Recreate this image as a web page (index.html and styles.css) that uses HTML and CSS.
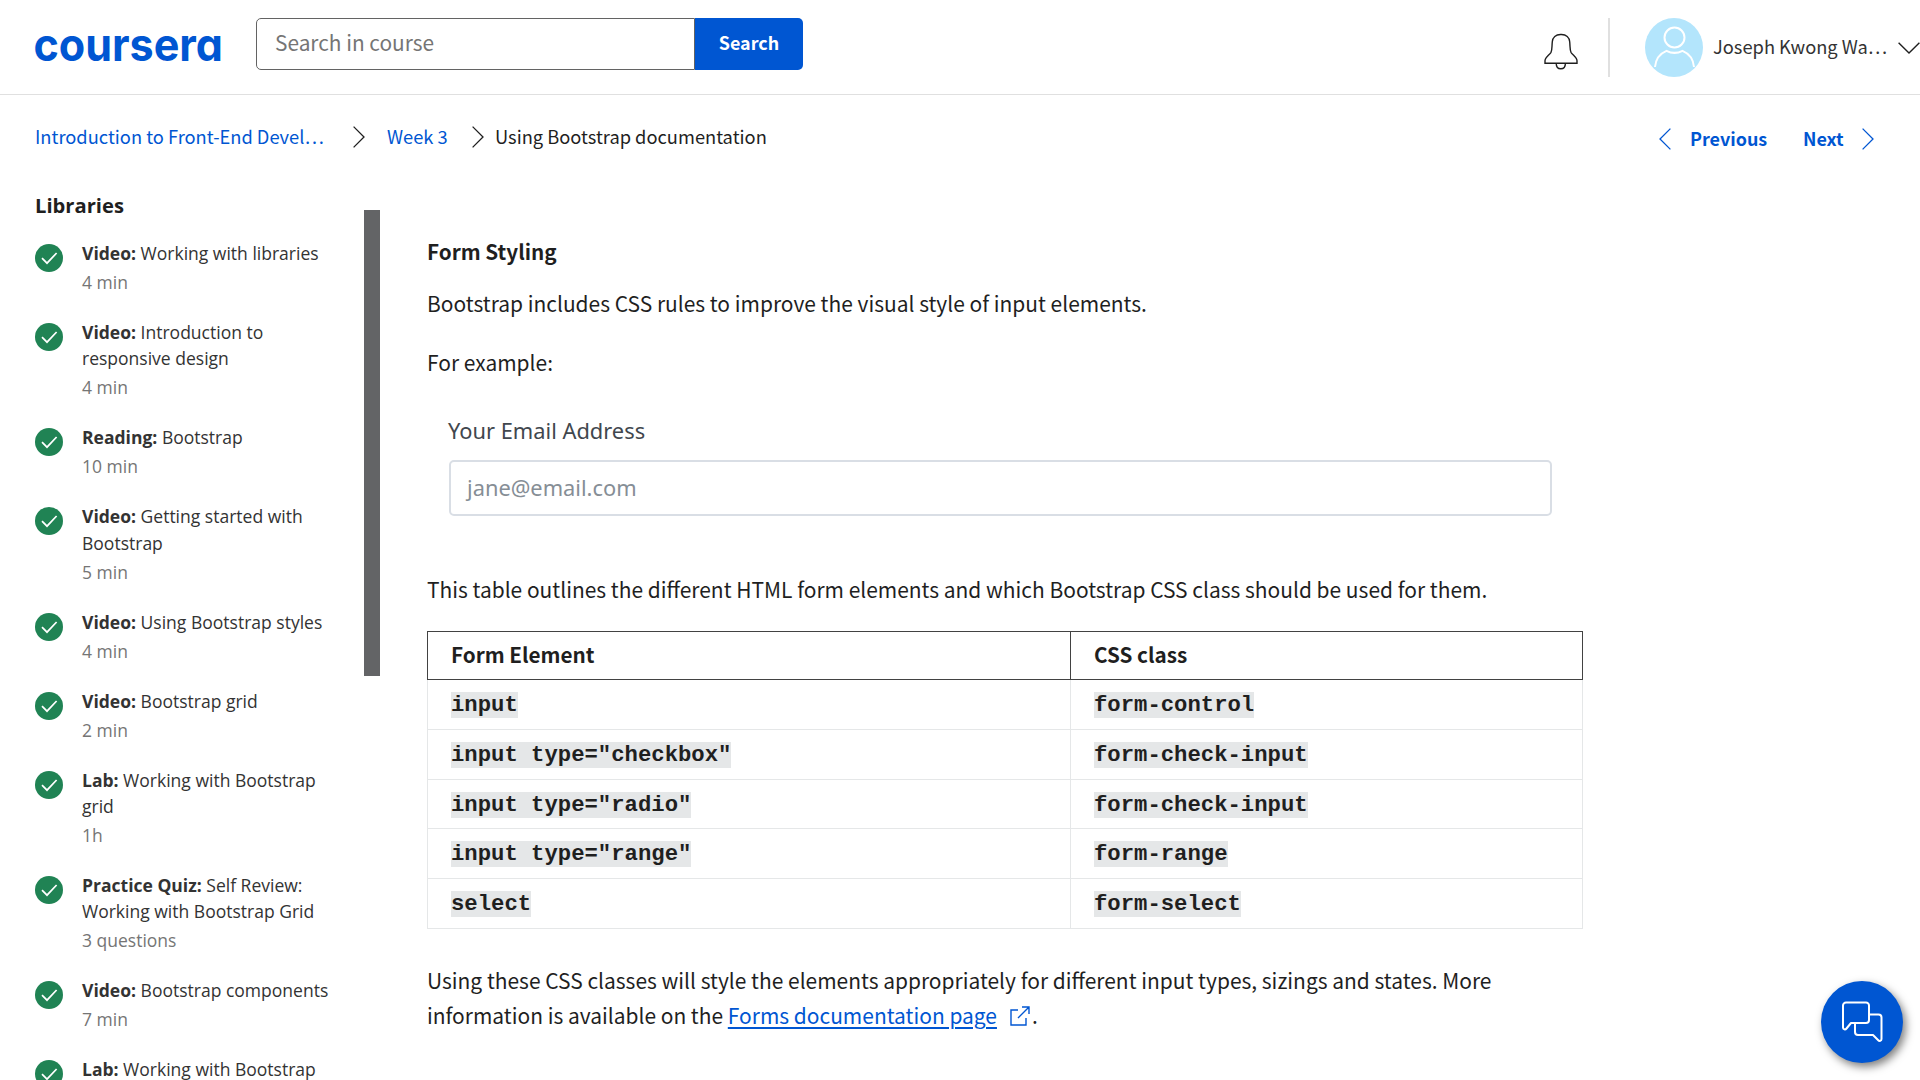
FILE: index.html
```html
<!DOCTYPE html>
<html lang="en">
<head>
<meta charset="utf-8">
<title>Using Bootstrap documentation | Coursera</title>
<link rel="stylesheet" href="styles.css">
</head>
<body>
<svg class="defs" width="0" height="0" aria-hidden="true">
  <symbol id="check" viewBox="0 0 28 28"><circle cx="14" cy="14" r="14" fill="#208354"/><path d="M7 14.2l5 5L21.6 9" fill="none" stroke="#fff" stroke-width="1.7"/></symbol>
  <symbol id="right" viewBox="0 0 12 22"><path d="M.6.6L11 11 .6 21.4" fill="none" stroke="currentColor" stroke-width="1.3"/></symbol>
  <symbol id="left" viewBox="0 0 12 22"><path d="M11.4.6L1 11l10.4 10.4" fill="none" stroke="currentColor" stroke-width="1.3"/></symbol>
</svg>

<header class="header">
  <a class="logo" aria-label="coursera"><svg width="200" height="50" viewBox="0 0 200 50"><text class="wordmark" x="-.5" y="33.500" textLength="189.500" lengthAdjust="spacingAndGlyphs">coursera</text></svg></a>
  <form class="search">
    <div class="search-field">Search in course</div>
    <div class="search-button">Search</div>
  </form>
  <div class="account">
    <svg class="bell" width="34" height="38" viewBox="0 0 34 38" fill="none" stroke="#1f1f1f" stroke-width="1.4"><path d="M16.500 1.500c-4.700 0-7.800 3-8.200 7.300-.5 5-.1 8.200-1.300 10.500C5.500 22 1 24.500 1 27.700v2.500h32v-2.500c0-3.200-4.500-5.700-6-8.400-1.200-2.300-.8-5.500-1.300-10.500-.4-4.300-3.500-7.300-8.200-7.300z"/><path d="M12.200 30.200c0 3.700 1.600 5.600 4.600 5.600s4.600-1.900 4.600-5.600"/></svg>
    <span class="divider"></span>
    <svg class="avatar" width="58" height="59" viewBox="0 0 58 59"><ellipse cx="29" cy="29.500" rx="29" ry="29.500" fill="#b3e5fc"/><g fill="none" stroke="#fff" stroke-width="2"><circle cx="29.500" cy="19.500" r="10"/><path d="M10 49c.6-6.800 4.500-13.300 11.500-16.200 5.200 2.700 10.800 2.700 16 0 7 2.900 10.900 9.400 11.500 16.200"/></g></svg>
    <span class="user">Joseph Kwong Wa…</span>
    <svg width="22" height="12" viewBox="0 0 22 12"><path d="M.6.8L11 11 21.400.8" fill="none" stroke="#1f1f1f" stroke-width="1.4"/></svg>
  </div>
</header>

<nav class="subnav">
  <div class="crumbs">
    <a class="course">Introduction to Front-End Devel…</a>
    <svg class="arrow"><use href="#right"/></svg>
    <a class="week">Week 3</a>
    <svg class="arrow"><use href="#right"/></svg>
    <span class="current">Using Bootstrap documentation</span>
  </div>
  <div class="pager">
    <svg class="arrow"><use href="#left"/></svg>
    <a class="prev">Previous</a>
    <a class="next">Next</a>
    <svg class="arrow"><use href="#right"/></svg>
  </div>
</nav>

<div class="layout">
  <aside class="sidebar">
    <h2>Libraries</h2>
    <ul class="lessons">
      <li><svg class="tick"><use href="#check"/></svg><div><p><b>Video:</b> Working with libraries</p><small>4 min</small></div></li>
      <li><svg class="tick"><use href="#check"/></svg><div><p><b>Video:</b> Introduction to responsive design</p><small>4 min</small></div></li>
      <li><svg class="tick"><use href="#check"/></svg><div><p><b>Reading:</b> Bootstrap</p><small>10 min</small></div></li>
      <li><svg class="tick"><use href="#check"/></svg><div><p><b>Video:</b> Getting started with Bootstrap</p><small>5 min</small></div></li>
      <li><svg class="tick"><use href="#check"/></svg><div><p><b>Video:</b> Using Bootstrap styles</p><small>4 min</small></div></li>
      <li><svg class="tick"><use href="#check"/></svg><div><p><b>Video:</b> Bootstrap grid</p><small>2 min</small></div></li>
      <li><svg class="tick"><use href="#check"/></svg><div><p><b>Lab:</b> Working with Bootstrap grid</p><small>1h</small></div></li>
      <li><svg class="tick"><use href="#check"/></svg><div><p><b>Practice Quiz:</b> Self Review: Working with Bootstrap Grid</p><small>3 questions</small></div></li>
      <li><svg class="tick"><use href="#check"/></svg><div><p><b>Video:</b> Bootstrap components</p><small>7 min</small></div></li>
      <li><svg class="tick"><use href="#check"/></svg><div><p><b>Lab:</b> Working with Bootstrap</p></div></li>
    </ul>
  </aside>
  <div class="scrollbar"></div>
  <main class="content">
    <h3>Form Styling</h3>
    <p>Bootstrap includes CSS rules to improve the visual style of input elements.</p>
    <p>For example:</p>
    <div class="example">
      <div class="example-label">Your Email Address</div>
      <div class="example-input">jane@email.com</div>
    </div>
    <p>This table outlines the different HTML form elements and which Bootstrap CSS class should be used for them.</p>
    <table>
      <thead><tr><th class="element">Form Element</th><th>CSS class</th></tr></thead>
      <tbody>
        <tr><td><code>input</code></td><td><code>form-control</code></td></tr>
        <tr><td><code>input type="checkbox"</code></td><td><code>form-check-input</code></td></tr>
        <tr class="short"><td><code>input type="radio"</code></td><td><code>form-check-input</code></td></tr>
        <tr><td><code>input type="range"</code></td><td><code>form-range</code></td></tr>
        <tr><td><code>select</code></td><td><code>form-select</code></td></tr>
      </tbody>
    </table>
    <p>Using these CSS classes will style the elements appropriately for different input types, sizings and states. More information is available on the <a class="doc">Forms documentation page</a><svg class="external" width="20" height="20" viewBox="0 0 20 20" fill="none" stroke="#0056d2" stroke-width="1.400"><path d="M8 4H1v15h15v-7M8 12L19 1M12 1h7v7"/></svg>.</p>
  </main>
</div>

<div class="chat"><svg width="42" height="42" viewBox="0 0 42 42" fill="none" stroke="#fff" stroke-width="2" stroke-linejoin="round"><path d="M5 1.500h20a3 3 0 0 1 3 3V19a3 3 0 0 1-3 3H10l-4.500 5.500c-1.200 1.500-3.500 1-3.500-1V4.500a3 3 0 0 1 3-3z"/><path d="M28 13.500h9.500a3 3 0 0 1 3 3V38c0 2-2 2.700-3.500 1l-5-5H17a3 3 0 0 1-3-3v-9"/></svg></div>
</body>
</html>
```
FILE: styles.css
```css
* { box-sizing: border-box; }
body { margin: 0; height: 1080px; overflow: hidden; background: #fff; color: #1f1f1f; font-family: "Noto Sans CJK SC", "Noto Sans", sans-serif; display: flex; flex-direction: column; }
h2, h3, p, ul { margin: 0; padding: 0; }
svg { display: block; flex: none; }
.defs { position: absolute; }

.header { display: flex; flex: none; height: 95px; padding: 18px 0 0 34px; border-bottom: 1px solid #e0e0e0; }
.logo { width: 222px; padding-top: 9px; }
.logo svg { overflow: visible; }
.wordmark { font: 700 45.8px Inter, sans-serif; font-feature-settings: "cv11"; fill: #0056d2; }
.search { display: flex; height: 52px; }
.search-field { width: 439px; padding-left: 18px; border: 1px solid #636363; border-radius: 5px 0 0 5px; font-size: 20.85px; line-height: 46px; color: #757575; }
.search-button { width: 108px; border-radius: 0 5px 5px 0; background: #0056d2; color: #fff; font-size: 17.9px; font-weight: 700; line-height: 48px; text-align: center; }
.account { display: flex; align-items: center; height: 59px; margin-left: auto; }
.divider { width: 2px; height: 59px; margin: 0 35px 0 30px; background: #e0e0e0; }
.bell { margin-top: 8px; }
.user { width: 185px; margin-left: 10px; padding-bottom: 3px; color: #333; font-size: 18.3px; line-height: 30px; white-space: nowrap; }

.subnav { display: flex; justify-content: space-between; flex: none; height: 56px; padding: 28px 46px 0 35px; font-size: 18.3px; line-height: 26px; }
.subnav a { color: #0056d2; }
.subnav .arrow { width: 12px; height: 22px; }
.subnav a, .current { padding-bottom: 2px; }
.crumbs { display: flex; align-items: center; height: 28px; }
.course { width: 318px; }
.week { width: 85px; margin-left: 22px; }
.current { margin-left: 11px; }
.pager { display: flex; align-items: center; height: 32px; color: #0056d2; font-size: 17.95px; font-weight: 700; }
.prev { width: 113px; margin-left: 19px; }
.next { width: 59px; }

.layout { display: flex; flex: 1; min-height: 0; }
.sidebar { flex: none; width: 364px; padding-left: 35px; font-family: "Open Sans", sans-serif; }
.sidebar h2 { margin-top: 39px; font-size: 20.2px; line-height: 30px; }
.lessons { list-style: none; margin-top: 20px; }
.lessons li { display: flex; gap: 19px; width: 305px; padding-bottom: 23.75px; font-size: 17.52px; line-height: 26.25px; color: #333; }
.lessons small { display: block; margin-top: 2.75px; font-size: 17.5px; color: #757575; }
.tick { width: 28px; height: 28px; margin-top: 4px; }
.scrollbar { flex: none; width: 16px; height: 466px; margin-top: 59px; background: #636466; }

.content { width: 1203px; padding: 85px 0 0 47px; }
.content p { font-size: 20.96px; line-height: 35px; }
.content h3 { margin-bottom: 20.4px; font-size: 20.7px; line-height: 30px; }
.content p + p { margin-top: 24px; }
.example { height: 192px; padding: 36px 31px 0 21px; font-family: "Noto Sans", sans-serif; font-size: 21.85px; color: #41474e; }
.example-label { line-height: 30px; }
.example-input { height: 56px; margin: 14px 0 0 1px; padding-left: 16px; border: 2px solid #d9dee5; border-radius: 5px; line-height: 52px; color: #868e96; }
table { width: 1156px; margin: 24px 0 34px; border-collapse: collapse; table-layout: fixed; }
th { height: 48px; padding: 0 23px 3px; border: 1px solid #424242; font-size: 20.7px; line-height: 30px; text-align: left; }
th.element { width: 643px; }
td { height: 50px; padding: 0 23px; border: 1px solid #e5e7e8; line-height: 30px; }
.short td { height: 49px; }
code { background: #e5e7e8; font: 700 22.26px/30px "Liberation Mono", monospace; }
.doc { color: #0056d2; text-decoration: underline; text-decoration-thickness: 2px; text-underline-offset: 3px; }
.external { display: inline-block; margin: 0 2px 0 13px; vertical-align: -2px; }

/* floating help button */
.chat { position: fixed; left: 1821px; top: 981px; width: 82px; height: 82px; padding: 20px 0 0 20px; border-radius: 50%; background: #0056d2; box-shadow: 3px 4px 8px rgba(0, 0, 0, .5); }
```
